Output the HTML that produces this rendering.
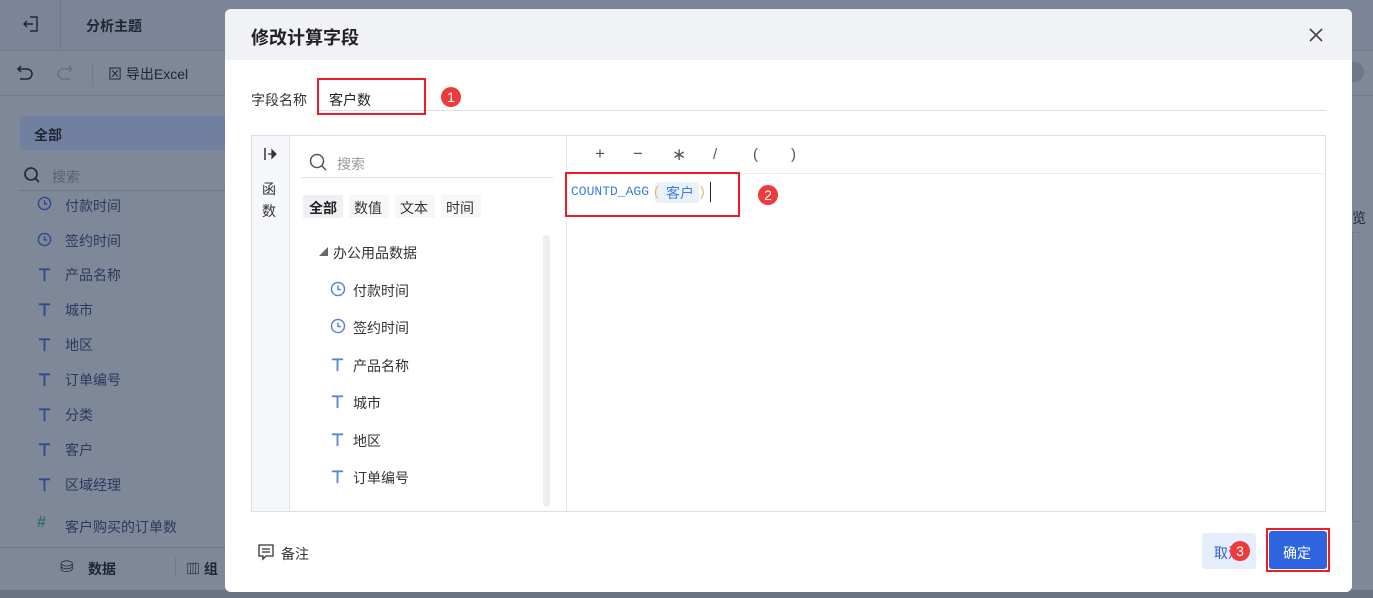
<!DOCTYPE html>
<html><head><meta charset="utf-8"><style>
*{margin:0;padding:0;box-sizing:border-box}
body{width:1373px;height:598px;overflow:hidden;background:#7f8899;font-family:"Liberation Sans","Noto Sans CJK SC",sans-serif;font-size:14px;color:#222;position:relative}
.a{position:absolute}
.bg{color:#1e2633}
.lt{color:#2a3a5c}
.modal{left:225px;top:9px;width:1127px;height:583px;background:#fff;border-radius:6px;overflow:hidden}
.hd{left:0;top:0;width:1127px;height:51px;background:#f0f2f6}
.red{border:2px solid #ee1c25}
.badge{width:20px;height:20px;border-radius:50%;background:#ee3a3a;color:#fff;font-size:14px;text-align:center;line-height:20px}
svg.a{overflow:visible}
</style></head><body>
<svg width="0" height="0" style="position:absolute">
<defs>
<symbol id="clk" viewBox="0 0 16 16"><circle cx="8" cy="8" r="6.5" fill="none" stroke="currentColor" stroke-width="1.5"/><path d="M8 4.5V8.5H11" fill="none" stroke="currentColor" stroke-width="1.5"/></symbol>
<symbol id="tt" viewBox="0 0 16 16"><path d="M2 2.5H14M8 2.5V15" fill="none" stroke="currentColor" stroke-width="2"/></symbol>
</defs></svg>
<!-- background page -->
<div class="a" style="left:0;top:0;width:1373px;height:50px;background:#7c8597"></div>
<div class="a" style="left:60px;top:0;width:1px;height:50px;background:#6f7889"></div>
<svg class="a" style="left:22px;top:15px;color:#1e2633" width="18" height="18" viewBox="0 0 18 18"><path d="M8 2H15V16H8M2 9H11M5 6L2 9L5 12" fill="none" stroke="currentColor" stroke-width="1.4"/></svg>
<div class="a bg" style="left:86px;top:16px;font-weight:bold;font-size:14px">分析主题</div>
<div class="a" style="left:0;top:50px;width:1373px;height:1px;background:#737c8d"></div>
<svg class="a" style="left:16px;top:64px;color:#1e2633" width="18" height="16" viewBox="0 0 18 16"><path d="M5 2L2 5L5 8M2 5H11A5 5 0 0 1 11 15H4" fill="none" stroke="currentColor" stroke-width="1.5"/></svg>
<svg class="a" style="left:56px;top:64px;color:#687183" width="18" height="16" viewBox="0 0 18 16"><path d="M13 2L16 5L13 8M16 5H7A5 5 0 0 0 7 15H14" fill="none" stroke="currentColor" stroke-width="1.5"/></svg>
<div class="a" style="left:92px;top:62px;width:1px;height:24px;background:#737c8d"></div>
<div class="a bg" style="left:108px;top:64px;font-size:14px">⊠ 导出Excel</div>
<div class="a" style="left:0;top:95px;width:1373px;height:1px;background:#737c8d"></div>
<div class="a" style="left:20px;top:116px;width:205px;height:34px;background:#7280a0;border-radius:4px 0 0 4px"></div>
<div class="a bg" style="left:34px;top:125px;font-weight:bold">全部</div>
<svg class="a" style="left:23px;top:166px;color:#1e2633" width="18" height="18" viewBox="0 0 18 18"><circle cx="8" cy="8" r="6" fill="none" stroke="currentColor" stroke-width="1.6"/><path d="M12.5 12.5L16 16" stroke="currentColor" stroke-width="1.6"/></svg>
<div class="a" style="left:52px;top:167px;color:#5a6374">搜索</div>
<div class="a" style="left:18px;top:190px;width:207px;height:1px;background:#6f7889"></div>
<svg class="a" style="left:37px;top:196px;color:#2d4a8a" width="15" height="15"><use href="#clk"/></svg><div class="a lt" style="left:65px;top:196px">付款时间</div>
<svg class="a" style="left:37px;top:232px;color:#2d4a8a" width="15" height="15"><use href="#clk"/></svg><div class="a lt" style="left:65px;top:231px">签约时间</div>
<svg class="a" style="left:37px;top:267px;color:#2d4a8a" width="15" height="15"><use href="#tt"/></svg><div class="a lt" style="left:65px;top:265px">产品名称</div>
<svg class="a" style="left:37px;top:302px;color:#2d4a8a" width="15" height="15"><use href="#tt"/></svg><div class="a lt" style="left:65px;top:300px">城市</div>
<svg class="a" style="left:37px;top:337px;color:#2d4a8a" width="15" height="15"><use href="#tt"/></svg><div class="a lt" style="left:65px;top:335px">地区</div>
<svg class="a" style="left:37px;top:372px;color:#2d4a8a" width="15" height="15"><use href="#tt"/></svg><div class="a lt" style="left:65px;top:370px">订单编号</div>
<svg class="a" style="left:37px;top:407px;color:#2d4a8a" width="15" height="15"><use href="#tt"/></svg><div class="a lt" style="left:65px;top:405px">分类</div>
<svg class="a" style="left:37px;top:442px;color:#2d4a8a" width="15" height="15"><use href="#tt"/></svg><div class="a lt" style="left:65px;top:440px">客户</div>
<svg class="a" style="left:37px;top:477px;color:#2d4a8a" width="15" height="15"><use href="#tt"/></svg><div class="a lt" style="left:65px;top:475px">区域经理</div>
<div class="a" style="left:37px;top:514px;color:#2d6e6e;font-weight:bold;font-size:16px">#</div><div class="a lt" style="left:65px;top:517px">客户购买的订单数</div>
<div class="a" style="left:0;top:547px;width:225px;height:1px;background:#6f7889"></div>
<div class="a bg" style="left:60px;top:557px;font-size:16px">⛁</div>
<div class="a bg" style="left:88px;top:559px;font-weight:bold">数据</div>
<div class="a" style="left:175px;top:558px;width:1px;height:18px;background:#6f7889"></div>
<div class="a bg" style="left:186px;top:559px;font-weight:bold">▥ 组</div>
<div class="a" style="left:0;top:590px;width:1373px;height:8px;background:#6a7283"></div>
<div class="a bg" style="left:1352px;top:208px">览</div>
<div class="a" style="left:1352px;top:232px;width:10px;height:290px;border:1px solid #737c8d;border-right:none"></div>
<div class="a" style="left:1352px;top:62px;width:12px;height:20px;background:#6f7889;border-radius:0 10px 10px 0"></div>

<!-- modal -->
<div class="a modal">
 <div class="a hd"></div>
 <div class="a" style="left:26px;top:15px;font-size:18px;font-weight:bold;color:#222">修改计算字段</div>
 <svg class="a" style="left:1084px;top:19px" width="14" height="14" viewBox="0 0 14 14"><path d="M1 1L13 13M13 1L1 13" stroke="#444" stroke-width="1.6"/></svg>
 <div class="a" style="left:26px;top:81px;color:#333">字段名称</div>
 <div class="a" style="left:93px;top:101px;width:1008px;height:1px;background:#dcdfe6"></div>
 <div class="a red" style="left:92px;top:69px;width:109px;height:37px"></div>
 <div class="a" style="left:104px;top:81px;color:#222">客户数</div>
 <div class="a badge" style="left:216px;top:78px">1</div>
 <div class="a" style="left:26px;top:126px;width:1075px;height:377px;border:1px solid #dcdfe6"></div>
 <div class="a" style="left:27px;top:127px;width:38px;height:375px;background:#f5f7fb;border-right:1px solid #e3e6ec"></div>
 <svg class="a" style="left:39px;top:139px" width="14" height="12" viewBox="0 0 14 12"><path d="M1 0V12" stroke="#333" stroke-width="1.5"/><path d="M4 6H8M8 2L12 6L8 10Z" fill="#333" stroke="#333" stroke-width="1.2"/></svg>
 <div class="a" style="left:37px;top:169px;font-size:14px;color:#333;line-height:22px">函<br>数</div>
 <svg class="a" style="left:84px;top:144px" width="18" height="18" viewBox="0 0 18 18"><circle cx="8" cy="8" r="6.5" fill="none" stroke="#555" stroke-width="1.5"/><path d="M12.8 12.8L17 17" stroke="#555" stroke-width="1.5"/></svg>
 <div class="a" style="left:112px;top:145px;color:#999">搜索</div>
 <div class="a" style="left:76px;top:168px;width:252px;height:1px;background:#dcdfe6"></div>
 <div class="a" style="left:78px;top:186px;width:40px;height:23px;background:#eef0f4"></div>
 <div class="a" style="left:84px;top:189px;font-weight:bold;color:#222">全部</div>
 <div class="a" style="left:124px;top:186px;width:40px;height:23px;background:#f6f7f9"></div>
 <div class="a" style="left:129px;top:189px;color:#333">数值</div>
 <div class="a" style="left:170px;top:186px;width:40px;height:23px;background:#f6f7f9"></div>
 <div class="a" style="left:175px;top:189px;color:#333">文本</div>
 <div class="a" style="left:216px;top:186px;width:40px;height:23px;background:#f6f7f9"></div>
 <div class="a" style="left:221px;top:189px;color:#333">时间</div>
 <div class="a" style="left:94px;top:236px;font-size:9px;color:#666">◢</div>
 <div class="a" style="left:108px;top:234px;color:#333">办公用品数据</div>
 <svg class="a" style="left:105px;top:272px;color:#5b86d8" width="16" height="16"><use href="#clk"/></svg><div class="a" style="left:128px;top:272px;color:#333">付款时间</div>
 <svg class="a" style="left:105px;top:309px;color:#5b86d8" width="16" height="16"><use href="#clk"/></svg><div class="a" style="left:128px;top:309px;color:#333">签约时间</div>
 <svg class="a" style="left:105px;top:348px;color:#5b86d8" width="15" height="15"><use href="#tt"/></svg><div class="a" style="left:128px;top:347px;color:#333">产品名称</div>
 <svg class="a" style="left:105px;top:385px;color:#5b86d8" width="15" height="15"><use href="#tt"/></svg><div class="a" style="left:128px;top:384px;color:#333">城市</div>
 <svg class="a" style="left:105px;top:423px;color:#5b86d8" width="15" height="15"><use href="#tt"/></svg><div class="a" style="left:128px;top:422px;color:#333">地区</div>
 <svg class="a" style="left:105px;top:460px;color:#5b86d8" width="15" height="15"><use href="#tt"/></svg><div class="a" style="left:128px;top:459px;color:#333">订单编号</div>
 <div class="a" style="left:318px;top:226px;width:7px;height:272px;background:#eceef2;border-radius:4px"></div>
 <div class="a" style="left:341px;top:127px;width:1px;height:375px;background:#e3e6ec"></div>
 <div class="a" style="left:342px;top:164px;width:758px;height:1px;background:#eceef2"></div>
 <div class="a" style="left:370px;top:135px;font-size:17px;color:#555">+</div>
 <div class="a" style="left:408px;top:135px;font-size:17px;color:#555">−</div>
 <div class="a" style="left:447px;top:136px;font-size:17px;color:#555">∗</div>
 <div class="a" style="left:488px;top:137px;font-size:15px;color:#555">/</div>
 <div class="a" style="left:528px;top:137px;font-size:15px;color:#555">(</div>
 <div class="a" style="left:566px;top:137px;font-size:15px;color:#555">)</div>
 <div class="a red" style="left:340px;top:163px;width:175px;height:45px"></div>
 <div class="a" style="left:346px;top:175px;font-family:'Liberation Mono',monospace;font-size:13px;color:#3b7ee0">COUNTD_AGG</div>
 <div class="a" style="left:430px;top:173px;width:44px;height:21px;background:#eaf1fb;border-radius:3px"></div>
 <div class="a" style="left:429px;top:174px;color:#d9b870">(</div>
 <div class="a" style="left:441px;top:174px;color:#3b7ee0">客户</div>
 <div class="a" style="left:475px;top:174px;color:#d9b870">)</div>
 <div class="a" style="left:485px;top:173px;width:1px;height:20px;background:#222"></div>
 <div class="a badge" style="left:533px;top:176px">2</div>
 <svg class="a" style="left:33px;top:535px" width="16" height="16" viewBox="0 0 16 16"><path d="M1 1H15V12H8L5 15V12H1Z M4 5H12M4 8H12" fill="none" stroke="#333" stroke-width="1.3"/></svg>
 <div class="a" style="left:56px;top:535px;color:#333">备注</div>
 <div class="a" style="left:977px;top:524px;width:54px;height:36px;background:#e6edfa;border-radius:3px"></div>
 <div class="a" style="left:989px;top:534px;color:#2c5fd4">取消</div>
 <div class="a badge" style="left:1005px;top:532px">3</div>
 <div class="a red" style="left:1041px;top:519px;width:64px;height:44px"></div>
 <div class="a" style="left:1044px;top:522px;width:58px;height:38px;background:#2f64e0;border-radius:3px"></div>
 <div class="a" style="left:1058px;top:534px;color:#fff">确定</div>
</div>
</body></html>
